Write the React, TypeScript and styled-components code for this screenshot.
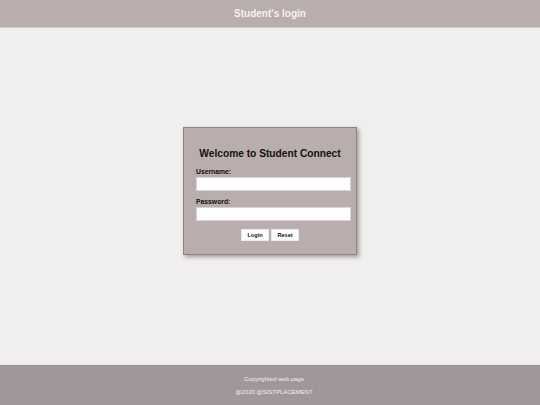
import React from "react";
import styled, { createGlobalStyle } from "styled-components";

const Global = createGlobalStyle`
  html, body { margin: 0; padding: 0; }
  body { font-family: "Liberation Sans", Arial, sans-serif; background: #f0efed; }
  * { box-sizing: border-box; }
`;

const Page = styled.div`
  display: flex;
  flex-direction: column;
  min-height: 405px;
`;

const Header = styled.header`
  height: 28px;
  background: #baadad;
  color: #f4f2f2;
  display: flex;
  align-items: center;
  justify-content: center;
  font-weight: bold;
  font-size: 10px;
  border-bottom: 1px solid #d2c9c9;
`;

const Main = styled.main`
  flex: 1;
  display: flex;
  align-items: center;
  justify-content: center;
  padding-bottom: 11px;
`;

const Card = styled.form`
  width: 174px;
  background: #baadad;
  border: 1px solid #8e8383;
  box-shadow: 2px 2px 4px rgba(0, 0, 0, 0.35);
  padding: 20px 12px 13px 12px;
  display: flex;
  flex-direction: column;
`;

const Title = styled.h2`
  margin: 0 0 7px 0;
  font-size: 10.2px;
  line-height: 12px;
  font-weight: bold;
  text-align: center;
  color: #111;
`;

const Label = styled.label`
  font-size: 6.8px;
  line-height: 9px;
  font-weight: bold;
  color: #111;
  margin-bottom: 1.5px;
`;

const Input = styled.input<{ $last?: boolean }>`
  width: calc(100% + 7px);
  height: 14px;
  border: 1px solid #d9d4d4;
  background: #fff;
  padding: 0 3px;
  margin: 0 0 ${(p) => (p.$last ? "7.5px" : "5.5px")} 0;
  font-size: 7px;
  outline: none;
`;

const Buttons = styled.div`
  display: flex;
  justify-content: center;
  gap: 2px;
`;

const Button = styled.button`
  width: 28px;
  height: 12.5px;
  background: #fff;
  border: 1px solid #ece9e9;
  padding: 0;
  font-family: "Liberation Sans", Arial, sans-serif;
  font-size: 5.6px;
  font-weight: bold;
  color: #111;
  cursor: pointer;
`;

const Footer = styled.footer`
  height: 40px;
  background: #a09898;
  border-top: 1px solid #958c8c;
  color: #f0eeee;
  display: flex;
  flex-direction: column;
  align-items: center;
  justify-content: center;
  gap: 5px;
  padding-left: 8px;
  font-size: 6px;
  line-height: 8px;
`;

const FooterLine = styled.div``;

export default function App() {
  return (
    <>
      <Global />
      <Page>
        <Header>Student's login</Header>
        <Main>
          <Card onSubmit={(e) => e.preventDefault()}>
            <Title>Welcome to Student Connect</Title>
            <Label htmlFor="u">Username:</Label>
            <Input id="u" type="text" />
            <Label htmlFor="p">Password:</Label>
            <Input id="p" type="password" $last />
            <Buttons>
              <Button type="submit">Login</Button>
              <Button type="reset">Reset</Button>
            </Buttons>
          </Card>
        </Main>
        <Footer>
          <FooterLine>Copyrighted web page</FooterLine>
          <FooterLine>@2020 @SISTPLACEMENT</FooterLine>
        </Footer>
      </Page>
    </>
  );
}
